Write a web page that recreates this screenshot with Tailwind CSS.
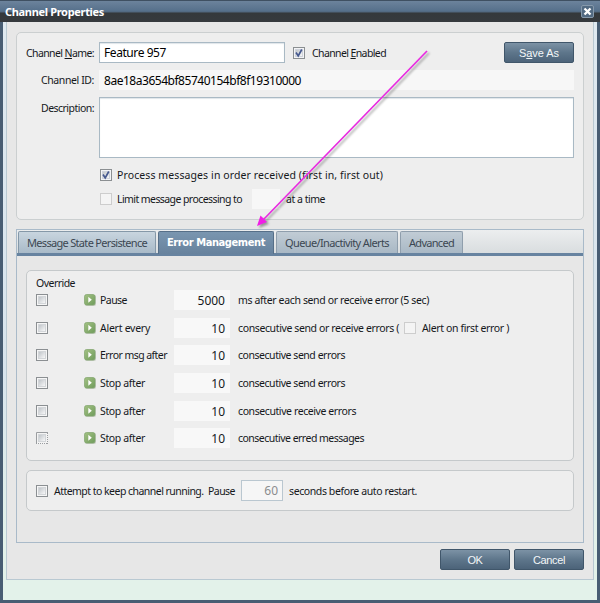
<!DOCTYPE html>
<html lang="en">
<head>
<meta charset="utf-8">
<title>Channel Properties</title>
<script src="https://cdn.jsdelivr.net/npm/@tailwindcss/browser@4"></script>
</head>
<body class="w-[600px] h-[603px] overflow-hidden bg-white">
<svg class="absolute size-0">
  <defs>
    <linearGradient id="green" x1="0" y1="0" x2="1" y2="1"><stop offset="0" stop-color="#a3c184"/><stop offset="1" stop-color="#6f9c5b"/></linearGradient>
    <linearGradient id="well" x1="0" y1="0" x2="1" y2="1"><stop offset="0" stop-color="#bcc1c6"/><stop offset="1" stop-color="#fcfcfc"/></linearGradient>
    <symbol id="box" viewBox="0 0 12 12"><rect x=".5" y=".5" width="11" height="11" fill="#f6f6f6" stroke="#8b8f92"/><rect x="2.5" y="2.5" width="7" height="7" fill="url(#well)" stroke="#d3d6d9"/></symbol>
    <symbol id="checked" viewBox="0 0 12 12"><rect x=".5" y=".5" width="11" height="11" fill="#f3f4f6" stroke="#8b8f92"/><rect x="2.5" y="2.5" width="7" height="7" fill="url(#well)" stroke="#cfd3dc"/><path d="M3 5.6 5.2 8.8 8.8 2.5" fill="none" stroke="#46598f" stroke-width="1.7"/></symbol>
    <symbol id="off" viewBox="0 0 12 12"><rect x=".5" y=".5" width="11" height="11" fill="#f4f4f4" stroke="#cdcdcd"/></symbol>
    <symbol id="focus" viewBox="0 0 12 12"><rect width="12" height="12" fill="#f3f3f3"/><path d="M.5 12V.5H12" fill="none" stroke="#9a9da0"/><path d="M11.5 1V12M0 11.5H12" fill="none" stroke="#9a9da0" stroke-dasharray="1 1"/><rect x="2.5" y="2.5" width="7" height="7" fill="url(#well)" stroke="#d3d6d9"/></symbol>
    <symbol id="go" viewBox="0 0 12 12"><rect x="1" y="1" width="11" height="11" rx="2" fill="#c4cbbf"/><rect x=".5" y=".5" width="10.5" height="10.5" rx="2" fill="url(#green)" stroke="#7fa36c" stroke-width=".7"/><path d="M4.3 2.8 7.8 5.8 4.3 8.8z" fill="#fff"/></symbol>
  </defs>
</svg>
<div class="relative w-[600px] h-[603px] flex flex-col bg-[#485d73] font-['Noto_Sans','Liberation_Sans',sans-serif] text-[10.5px] leading-[14px] text-[#15181c]">
  <header class="h-[22px] shrink-0 flex items-center justify-between pl-[5px] pr-[6px] border-t border-[#3f5062] bg-[linear-gradient(#6c839c_0px,#56708b_10px,#50657b_11px,#34383b_12px,#363a3e_22px)]">
    <h1 class="text-[11px] font-bold text-white"><span data-w="99">Channel Properties</span></h1>
    <svg class="w-[13px] h-[13px]" viewBox="0 0 13 13"><rect x=".5" y=".5" width="12" height="12" rx="1.5" fill="#526a82" stroke="#8699ab"/><path d="m3.5 3.5 6 6m0-6-6 6" stroke="#fff" stroke-width="2.3"/></svg>
  </header>
  <div class="h-[578px] shrink-0 ml-[3px] mr-[3px] px-[3px] bg-[linear-gradient(#dfe9f0_0px,#d8e4ed_350px,#e3f2ea_520px)]">
    <main class="h-[558px] bg-[#e7e7e7] border border-t-0 border-[#b9c9d2] px-[9px] pt-[10px]">
      <section class="h-[188px] bg-[#eeeeee] border border-[#cbcfd0] rounded-[5px] pt-[9px] pl-[8px] pr-[9px]">
        <div class="h-[21px] flex items-center">
          <label class="w-[69px] flex justify-end shrink-0"><span data-w="68">Channel <u>N</u>ame:</span></label>
          <div class="ml-[5px] w-[186px] h-[21px] bg-white border border-[#a9b9c4] shadow-[inset_0_1px_1px_#dfe5e9] pl-[4px] flex items-center text-[12px] text-black"><span data-w="62">Feature 957</span></div>
          <svg class="ml-[8px] size-[12px]"><use href="#checked"/></svg>
          <span class="ml-[7px]" data-w="74">Channel <u>E</u>nabled</span>
          <button class="ml-auto w-[70px] h-[21px] rounded-[2px] border border-[#40566a] bg-linear-to-b from-[#7c92a5] via-[#5e768b] to-[#4c6379] text-[11px] text-[#f3f6f8] font-['Liberation_Sans',sans-serif]"><span data-w="40">S<u>a</u>ve As</span></button>
        </div>
        <div class="mt-[7px] h-[20px] flex items-center">
          <label class="w-[69px] flex justify-end shrink-0"><span data-w="53">Channel ID:</span></label>
          <div class="ml-[5px] grow h-[20px] bg-[#f7f7f7] pl-[5px] pt-px flex items-center text-[12px] text-black"><span data-w="197">8ae18a3654bf85740154bf8f19310000</span></div>
        </div>
        <div class="mt-[7px] h-[61px] flex">
          <label class="w-[69px] flex justify-end shrink-0 pt-[4px]"><span data-w="53">Description:</span></label>
          <div class="ml-[5px] grow bg-white border border-[#a9b9c4] shadow-[inset_0_1px_1px_#dfe5e9]"></div>
        </div>
        <div class="mt-[11px] ml-[75px] h-[12px] flex items-center"><svg class="size-[12px]"><use href="#checked"/></svg><span class="ml-[5px]" data-w="266">Process messages in order received (first in, first out)</span></div>
        <div class="mt-[8px] ml-[75px] h-[20px] flex items-center"><svg class="size-[12px]"><use href="#off"/></svg><div class="ml-[5px] w-[130px]"><span data-w="125">Limit message processing to</span></div><div class="ml-[5px] w-[28px] h-[20px] bg-[#f7f7f7]"></div><span class="ml-[6px]" data-w="39">at a time</span></div>
      </section>
      <section class="mt-[9px] h-[314px] border border-[#a9bac9]">
        <nav class="h-[26px] pt-px pl-px border-b-[3px] border-[#6783a0] bg-linear-to-b from-[#eceeef] to-[#d9dddf] flex gap-[2px] text-[#3c4752] text-[11px]">
          <div class="w-[138px] h-[22px] rounded-t-[2px] border border-b-0 border-[#8598a8] bg-linear-to-b from-[#c8d5df] to-[#a9bac8] flex items-center justify-center"><span data-w="120">Message State Persistence</span></div>
          <div class="w-[116px] h-[23px] rounded-t-[2px] border border-b-0 border-[#566f88] bg-linear-to-b from-[#7a96b0] to-[#67829d] flex items-center justify-center text-white text-[11px] font-bold font-['DejaVu_Sans_Condensed','DejaVu_Sans',sans-serif]"><span data-w="98">Error Management</span></div>
          <div class="w-[122px] h-[22px] rounded-t-[2px] border border-b-0 border-[#8f9eac] bg-linear-to-b from-[#c1ccd5] to-[#a9b8c5] flex items-center justify-center"><span data-w="104">Queue/Inactivity Alerts</span></div>
          <div class="w-[63px] h-[22px] rounded-t-[2px] border border-b-0 border-[#8f9eac] bg-linear-to-b from-[#c1ccd5] to-[#a9b8c5] flex items-center justify-center"><span data-w="45">Advanced</span></div>
        </nav>
        <div class="px-[9px] pt-[14px]">
          <div class="h-[191px] bg-[#eeeeee] border border-[#c5c9cb] rounded-[5px] pl-[9px] pt-[5px]">
            <div class="h-[10px] leading-[14px]"><span data-w="39">Override</span></div>
            <div class="grid grid-cols-[48px_16px_74px_64px_1fr] auto-rows-[27.7px] items-center">
              <svg class="size-[12px]"><use href="#box"/></svg><svg class="size-[12px]"><use href="#go"/></svg><div><span data-w="27">Pause</span></div><div class="w-[56px] h-[20px] bg-[#f8f8f8] text-right pr-[5px] leading-[21px] text-[12px]">5000</div><div><span data-w="191">ms after each send or receive error (5 sec)</span></div>
              <svg class="size-[12px]"><use href="#box"/></svg><svg class="size-[12px]"><use href="#go"/></svg><div><span data-w="50">Alert every</span></div><div class="w-[56px] h-[20px] bg-[#f8f8f8] text-right pr-[5px] leading-[21px] text-[12px]">10</div><div class="flex items-center"><div class="w-[162px]"><span data-w="161">consecutive send or receive errors (</span></div><svg class="ml-[4px] size-[12px]"><use href="#off"/></svg><span class="ml-[6px]" data-w="87">Alert on first error )</span></div>
              <svg class="size-[12px]"><use href="#box"/></svg><svg class="size-[12px]"><use href="#go"/></svg><div><span data-w="67">Error msg after</span></div><div class="w-[56px] h-[20px] bg-[#f8f8f8] text-right pr-[5px] leading-[21px] text-[12px]">10</div><div><span data-w="107">consecutive send errors</span></div>
              <svg class="size-[12px]"><use href="#box"/></svg><svg class="size-[12px]"><use href="#go"/></svg><div><span data-w="45">Stop after</span></div><div class="w-[56px] h-[20px] bg-[#f8f8f8] text-right pr-[5px] leading-[21px] text-[12px]">10</div><div><span data-w="107">consecutive send errors</span></div>
              <svg class="size-[12px]"><use href="#box"/></svg><svg class="size-[12px]"><use href="#go"/></svg><div><span data-w="45">Stop after</span></div><div class="w-[56px] h-[20px] bg-[#f8f8f8] text-right pr-[5px] leading-[21px] text-[12px]">10</div><div><span data-w="118">consecutive receive errors</span></div>
              <svg class="size-[12px]"><use href="#focus"/></svg><svg class="size-[12px]"><use href="#go"/></svg><div><span data-w="45">Stop after</span></div><div class="w-[56px] h-[20px] bg-[#f8f8f8] text-right pr-[5px] leading-[21px] text-[12px]">10</div><div><span data-w="126">consecutive erred messages</span></div>
            </div>
          </div>
          <div class="mt-[9px] h-[41px] bg-[#eeeeee] border border-[#c5c9cb] rounded-[5px] pl-[9px] flex items-center">
            <svg class="size-[12px]"><use href="#box"/></svg><div class="ml-[6px] w-[181px]"><span data-w="181" class="whitespace-pre">Attempt to keep channel running.  Pause</span></div>
            <div class="ml-[6px] w-[42px] h-[21px] bg-[#f6f6f6] border border-[#bac7d0] text-right pr-[4px] leading-[20px] text-[12px] text-[#8b8d8f]">60</div>
            <span class="ml-[6px]" data-w="128">seconds before auto restart.</span>
          </div>
        </div>
      </section>
      <footer class="mt-[6px] flex justify-end gap-[4px] text-[11px]">
        <button class="w-[70px] h-[21px] rounded-[2px] border border-[#40566a] bg-linear-to-b from-[#7c92a5] via-[#5e768b] to-[#4c6379] text-[#f3f6f8] font-['Liberation_Sans',sans-serif]"><span data-w="15">OK</span></button>
        <button class="w-[70px] h-[21px] rounded-[2px] border border-[#40566a] bg-linear-to-b from-[#7c92a5] via-[#5e768b] to-[#4c6379] text-[#f3f6f8] font-['Liberation_Sans',sans-serif]"><span data-w="32">Cancel</span></button>
      </footer>
    </main>
  </div>
  <svg class="absolute left-0 top-0 w-[600px] h-[603px] pointer-events-none drop-shadow-[2px_2px_1px_rgba(0,0,0,0.35)]" viewBox="0 0 600 603"><path d="M427 51 263 220" stroke="#e82be0" stroke-width="1.7" fill="none"/><path d="m257 226 3.5-10.5 6.5 6.5z" fill="#f01ee6"/></svg>
</div>
<script>
  // Fit each caption to its nominal width by adjusting the tracking.
  function fit() {
    const spans = [...document.querySelectorAll('[data-w]')];
    spans.forEach(s => { s.style.whiteSpace = 'pre'; s.style.letterSpacing = '0px'; s.style.flexShrink = '0'; });
    spans.forEach(s => {
      const gap = Number(s.dataset.w) - s.getBoundingClientRect().width;
      s.style.letterSpacing = (gap / s.textContent.length).toFixed(3) + 'px';
    });
  }
  window.addEventListener('load', () => {
    fit();
    requestAnimationFrame(fit);
    document.fonts.ready.then(fit);
    new MutationObserver(fit).observe(document.head, { childList: true });
  });
</script>
</body>
</html>
